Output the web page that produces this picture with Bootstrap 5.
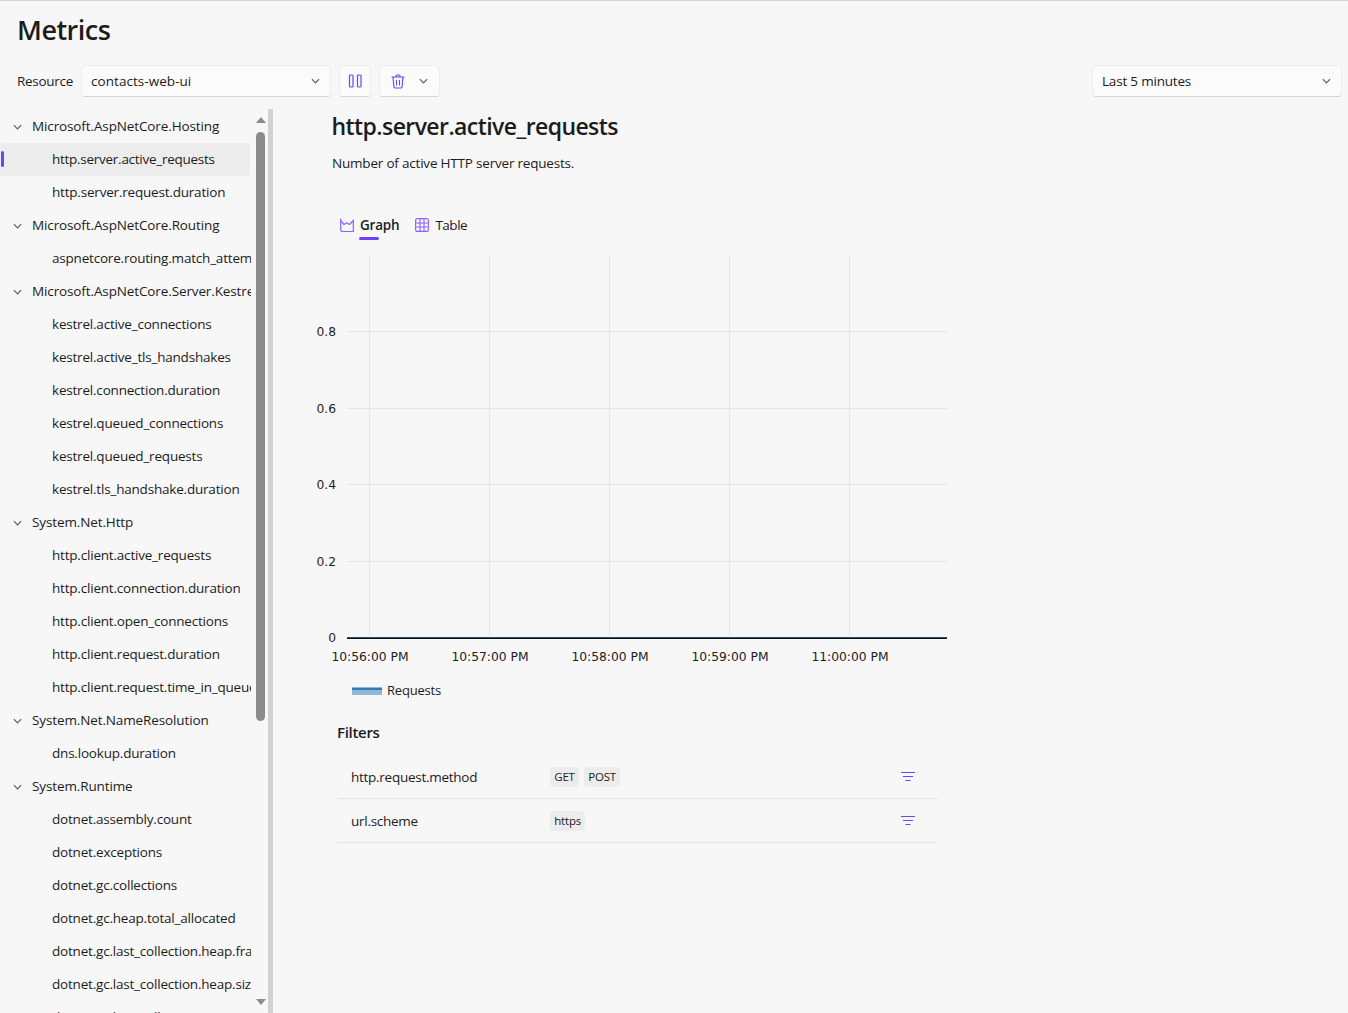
<!DOCTYPE html>
<html lang="en">
<head>
  <meta charset="UTF-8">
  <title>Metrics</title>
  <link href="https://cdn.jsdelivr.net/npm/bootstrap@5.3.3/dist/css/bootstrap.min.css" rel="stylesheet">
  <style>
    html, body { height: 100%; }
    body { background: #f7f7f7; color: #1c1c1c; font-family: "Open Sans", "Noto Sans", sans-serif; font-size: 13.5px; letter-spacing: -.2px; overflow: hidden; border-top: 1px solid #d6d6d6; }
    .page-title { font-size: 27px; font-weight: 600; line-height: 36px; margin: 11px 0 0 17px; letter-spacing: -.5px; }
    .toolbar { height: 32px; margin: 17px 6px 12px 17px; }
    .toolbar-label { width: 57px; letter-spacing: -.3px; }
    .field-btn { height: 32px; background: #fbfbfb; border: 1px solid #ececec; border-bottom-color: #d4d4d4; border-radius: 4px; font-size: 13.5px; color: #1c1c1c; padding: 0 10px 0 9px; letter-spacing: -.2px; }
    .field-btn:hover { background: #fbfbfb; }
    .res-select { width: 250px; margin-left: 7px; letter-spacing: .05px; }
    .time-select { width: 250px; }
    .tree-wrap { flex: 1; min-height: 0; }
    .tree-col { width: 251px; padding-top: 1px; overflow: hidden; }
    .tree-row { height: 33px; line-height: 33px; white-space: nowrap; position: relative; }
    .tree-row.group { padding-left: 32px; letter-spacing: -.12px; }
    .tree-row.leaf { padding-left: 52px; }
    .tree-row.active { background: #ececec; border-radius: 4px; width: 250px; letter-spacing: -.27px; }
    .tree-row.active::before { content: ""; position: absolute; left: 1px; top: 8px; width: 3px; height: 16px; border-radius: 2px; background: #6f42ff; }
    .tree-chevron { position: absolute; left: 13px; top: 14px; }
    .scroll-col { width: 9px; margin-left: 5px; margin-top: 8px; }
    .scroll-thumb { width: 9px; height: 589px; margin-top: 9px; background: #8c8c8c; border-radius: 5px; flex-shrink: 0; }
    .scroll-up, .scroll-down { width: 0; height: 0; flex-shrink: 0; border-left: 5px solid transparent; border-right: 5px solid transparent; }
    .scroll-up { border-bottom: 6px solid #8c8c8c; }
    .scroll-down { border-top: 6px solid #8c8c8c; margin-top: 278px; }
    .splitter { width: 5px; margin-left: 3px; background: #d2d2d2; }
    .detail { padding-left: 37px; min-width: 0; }
    .metric-title { font-size: 23px; font-weight: 600; line-height: 32px; margin: 1px 0 0 21.5px; letter-spacing: -.58px; }
    .metric-desc { margin: 11px 0 0 22px; line-height: 20px; }
    .tab-bar { margin: 40px 0 0 30px; height: 24px; gap: 16px; }
    .tab-item { gap: 6px; position: relative; line-height: 20px; }
    .tab-item.on { font-weight: 600; }
    .tab-item.plain span { letter-spacing: -.5px; }
    .tab-item.on::after { content: ""; position: absolute; left: 19px; bottom: -5px; width: 20px; height: 3px; border-radius: 2px; background: #6f42ff; }
    .chart-svg { display: block; margin-top: 13px; }
    .axis-text { font-family: "DejaVu Sans", sans-serif; font-size: 12.3px; fill: #1c1c1c; letter-spacing: 0; }
    .legend-text { font-family: "Open Sans", sans-serif; font-size: 13px; fill: #1c1c1c; letter-spacing: -.2px; }
    .filters-box { width: 600px; margin: 21px 0 0 27px; }
    .filters-title { font-size: 15px; font-weight: 600; margin: 0 0 12px 0; line-height: 22px; letter-spacing: -.3px; }
    .filter-row { height: 44px; border-bottom: 1px solid #e6e6e6; padding-left: 14px; }
    .filter-name { width: 199px; margin-top: 2px; letter-spacing: -.27px; }
    .filter-tag { background: #ececec; border-radius: 4px; padding: 0 4.25px; font-size: 11.5px; line-height: 20px; margin-right: 5px; letter-spacing: -.2px; }
    .filter-icon { margin-left: auto; margin-right: 22px; }
  </style>
</head>
<body class="d-flex flex-column">
  <h1 class="page-title">Metrics</h1>

  <div class="toolbar d-flex align-items-center">
    <span class="toolbar-label">Resource</span>
    <button class="btn field-btn res-select d-flex align-items-center justify-content-between">
      <span>contacts-web-ui</span>
      <svg width="9" height="6" viewBox="0 0 10 6" fill="none" stroke="#5c5c5c" stroke-width="1.3"><path d="M1 1l4 4 4-4"/></svg>
    </button>
    <button class="btn field-btn d-flex align-items-center justify-content-center ms-2" style="width:32px;padding:0">
      <svg width="14" height="14" viewBox="0 0 14 14" fill="none" stroke="#6f42ff" stroke-width="1.2"><rect x="1.500" y="1" width="3.500" height="12" rx=".8"/><rect x="9.500" y="1" width="3.500" height="12" rx=".8"/></svg>
    </button>
    <button class="btn field-btn d-flex align-items-center ms-2" style="width:61px;padding:0 11px">
      <svg width="14" height="15" viewBox="0 0 14 15" fill="none" stroke="#6f42ff" stroke-width="1.1"><path d="M.5 3h13M5 3V2a1 1 0 0 1 1-1h2a1 1 0 0 1 1 1v1M2 3l.9 9.600a1.500 1.500 0 0 0 1.500 1.400h5.200a1.500 1.500 0 0 0 1.500-1.400L12 3M5.500 6v5.500M8.500 6v5.500"/></svg>
      <svg class="ms-auto" width="9" height="6" viewBox="0 0 10 6" fill="none" stroke="#5c5c5c" stroke-width="1.3"><path d="M1 1l4 4 4-4"/></svg>
    </button>
    <button class="btn field-btn time-select d-flex align-items-center justify-content-between ms-auto">
      <span>Last 5 minutes</span>
      <svg width="9" height="6" viewBox="0 0 10 6" fill="none" stroke="#5c5c5c" stroke-width="1.3"><path d="M1 1l4 4 4-4"/></svg>
    </button>
  </div>

  <div class="tree-wrap d-flex">
    <div class="tree-col" id="tree"></div>
    <div class="scroll-col d-flex flex-column align-items-center">
      <div class="scroll-up"></div>
      <div class="scroll-thumb"></div>
      <div class="scroll-down"></div>
    </div>
    <div class="splitter"></div>

    <div class="detail flex-grow-1">
      <h2 class="metric-title">http.server.active_requests</h2>
      <p class="metric-desc">Number of active HTTP server requests.</p>

      <div class="tab-bar d-flex align-items-center">
        <div class="tab-item on d-flex align-items-center">
          <svg width="14" height="14" viewBox="0 0 14 14" fill="none" stroke="#8a63ff" stroke-width="1.2"><path d="M.7 .5v11a2 2 0 0 0 2 2h10.600V2.500L9.500 6.500 6.500 5 4 6.500.7 2.500"/></svg>
          <span>Graph</span>
        </div>
        <div class="tab-item plain d-flex align-items-center">
          <svg width="14" height="14" viewBox="0 0 14 14" fill="none" stroke="#8a63ff" stroke-width="1.1"><rect x=".6" y=".6" width="12.800" height="12.800" rx="2"/><path d="M5 .6v12.800M9 .6v12.800M.6 5h12.800M.6 9h12.800"/></svg>
          <span>Table</span>
        </div>
      </div>

      <svg class="chart-svg" width="650" height="450" viewBox="310 250 650 450" id="chart"></svg>

      <div class="filters-box">
        <div class="filters-title">Filters</div>
        <div class="filter-row d-flex align-items-center">
          <span class="filter-name">http.request.method</span>
          <span class="filter-tag">GET</span><span class="filter-tag">POST</span>
          <svg class="filter-icon" width="14" height="9" viewBox="0 0 14 9" stroke="#6f42ff" stroke-width="1"><path d="M0 .5h14M2 4.500h10M4.500 8.500h5"/></svg>
        </div>
        <div class="filter-row d-flex align-items-center">
          <span class="filter-name">url.scheme</span>
          <span class="filter-tag">https</span>
          <svg class="filter-icon" width="14" height="9" viewBox="0 0 14 9" stroke="#6f42ff" stroke-width="1"><path d="M0 .5h14M2 4.500h10M4.500 8.500h5"/></svg>
        </div>
      </div>
    </div>
  </div>

  <script>
    const treeData = [
      ["Microsoft.AspNetCore.Hosting", ["http.server.active_requests", "http.server.request.duration"]],
      ["Microsoft.AspNetCore.Routing", ["aspnetcore.routing.match_attempts"]],
      ["Microsoft.AspNetCore.Server.Kestrel", ["kestrel.active_connections", "kestrel.active_tls_handshakes", "kestrel.connection.duration", "kestrel.queued_connections", "kestrel.queued_requests", "kestrel.tls_handshake.duration"]],
      ["System.Net.Http", ["http.client.active_requests", "http.client.connection.duration", "http.client.open_connections", "http.client.request.duration", "http.client.request.time_in_queue"]],
      ["System.Net.NameResolution", ["dns.lookup.duration"]],
      ["System.Runtime", ["dotnet.assembly.count", "dotnet.exceptions", "dotnet.gc.collections", "dotnet.gc.heap.total_allocated", "dotnet.gc.last_collection.heap.fragmentation.size", "dotnet.gc.last_collection.heap.size", "dotnet.gc.last_collection.memory.committed_size"]]
    ];
    const chevron = '<svg class="tree-chevron" width="9" height="6" viewBox="0 0 10 6" fill="none" stroke="#5c5c5c" stroke-width="1.3"><path d="M1 1l4 4 4-4"/></svg>';
    let treeHtml = "";
    for (const [group, items] of treeData) {
      treeHtml += `<div class="tree-row group">${chevron}${group}</div>`;
      for (const item of items) {
        const on = item === "http.server.active_requests" ? " active" : "";
        treeHtml += `<div class="tree-row leaf${on}">${item}</div>`;
      }
    }
    document.getElementById("tree").innerHTML = treeHtml;

    let svg = "";
    for (const x of [369.5, 489.5, 609.5, 729.5, 849.5])
      svg += `<line x1="${x}" x2="${x}" y1="255" y2="637" stroke="#e6e6e6"/>`;
    for (const [y, t] of [[331.5, "0.8"], [408.5, "0.6"], [484.5, "0.4"], [561.5, "0.2"], [642, "0"]]) {
      if (t !== "0") svg += `<line x1="347" x2="947" y1="${y}" y2="${y}" stroke="#e6e6e6"/>`;
      svg += `<text class="axis-text" x="336" y="${t === "0" ? 642 : y + 4.5}" text-anchor="end">${t}</text>`;
    }
    svg += `<rect x="347" y="637" width="600" height="2" fill="#111"/><rect x="347" y="637" width="600" height=".7" fill="#2b6ea5"/>`;
    for (const [x, t] of [[370, "10:56:00 PM"], [490, "10:57:00 PM"], [610, "10:58:00 PM"], [730, "10:59:00 PM"], [850, "11:00:00 PM"]])
      svg += `<text class="axis-text" x="${x}" y="661" text-anchor="middle">${t}</text>`;
    svg += `<rect x="352" y="687" width="30" height="8" fill="#8fb7d6"/><rect x="352" y="688" width="30" height="2" fill="#2f7bb3"/>`;
    svg += `<text class="legend-text" x="387" y="695">Requests</text>`;
    document.getElementById("chart").innerHTML = svg;
  </script>
  <script src="https://cdn.jsdelivr.net/npm/bootstrap@5.3.3/dist/js/bootstrap.bundle.min.js"></script>
</body>
</html>
